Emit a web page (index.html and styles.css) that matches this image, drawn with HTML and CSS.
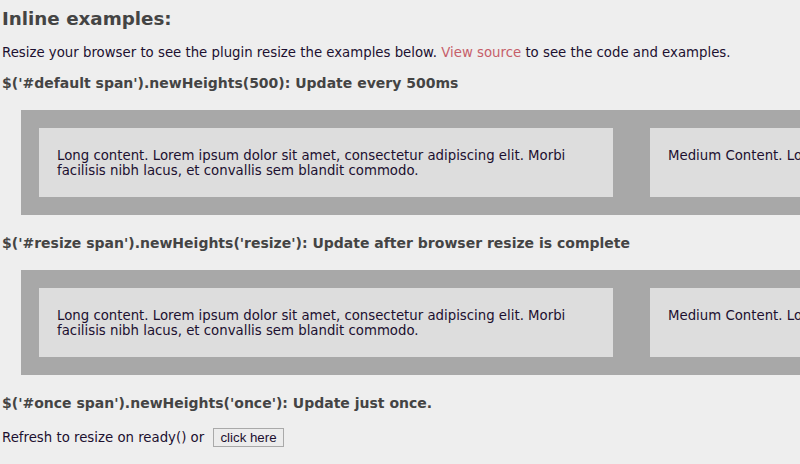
FILE: index.html
```html
<!DOCTYPE html>
<html>
<head>
<meta charset="utf-8">
<link rel="stylesheet" href="styles.css">
</head>
<body>
<h2 class="title">Inline examples:</h2>
<p class="intro">Resize your browser to see the plugin resize the examples below. <a class="link" href="#">View source</a> to see the code and examples.</p>

<h3 class="sub">$('#default span').newHeights(500): Update every 500ms</h3>
<div class="box">
  <span class="item">Long content. Lorem ipsum dolor sit amet, consectetur adipiscing elit. Morbi facilisis nibh lacus, et convallis sem blandit commodo.</span>
  <span class="item">Medium Content. Lorem ipsum dolor sit amet, consectetur adipiscing elit.</span>
</div>

<h3 class="sub">$('#resize span').newHeights('resize'): Update after browser resize is complete</h3>
<div class="box">
  <span class="item">Long content. Lorem ipsum dolor sit amet, consectetur adipiscing elit. Morbi facilisis nibh lacus, et convallis sem blandit commodo.</span>
  <span class="item">Medium Content. Lorem ipsum dolor sit amet, consectetur adipiscing elit.</span>
</div>

<h3 class="sub">$('#once span').newHeights('once'): Update just once.</h3>
<p class="refresh">Refresh to resize on ready() or <button class="btn">click here</button></p>
</body>
</html>
```
FILE: styles.css
```css
html, body {
  margin: 0;
  padding: 0;
  background: #eeeeee;
  overflow: hidden;
}
body {
  padding: 0 2px;
  font-family: "DejaVu Sans", Verdana, sans-serif;
  font-size: 13.3px;
  color: #1c1030;
  width: 800px;
  height: 464px;
  box-sizing: border-box;
}
.title {
  margin: 8px 0 0;
  font-size: 18.3px;
  line-height: 22px;
  color: #444444;
  font-weight: bold;
}
.intro {
  margin: 15px 0 0;
  line-height: 16px;
}
.link {
  color: #c65f6a;
  text-decoration: none;
}
.sub {
  margin: 14px 0 0;
  font-size: 14px;
  line-height: 17px;
  color: #444444;
  font-weight: bold;
}
.box {
  margin: 18px 0 0 19px;
  background: #a8a8a8;
  padding: 18px;
  display: flex;
  gap: 37px;
  width: 1400px;
}
.item {
  flex: 0 0 auto;
  width: 538px;
  background: #dddddd;
  padding: 20px 18px 19px;
  line-height: 15px;
}
.box + .sub {
  margin-top: 20px;
}
.refresh {
  margin: 16px 0 0;
  line-height: 20px;
}
.btn {
  font-family: "Liberation Sans", Arial, sans-serif;
  font-size: 13.3px;
  color: #1c1030;
  background: #ececec;
  border: 1px solid #a9a9a9;
  padding: 1px 6px;
  margin-left: 5px;
  border-radius: 0;
}
```
